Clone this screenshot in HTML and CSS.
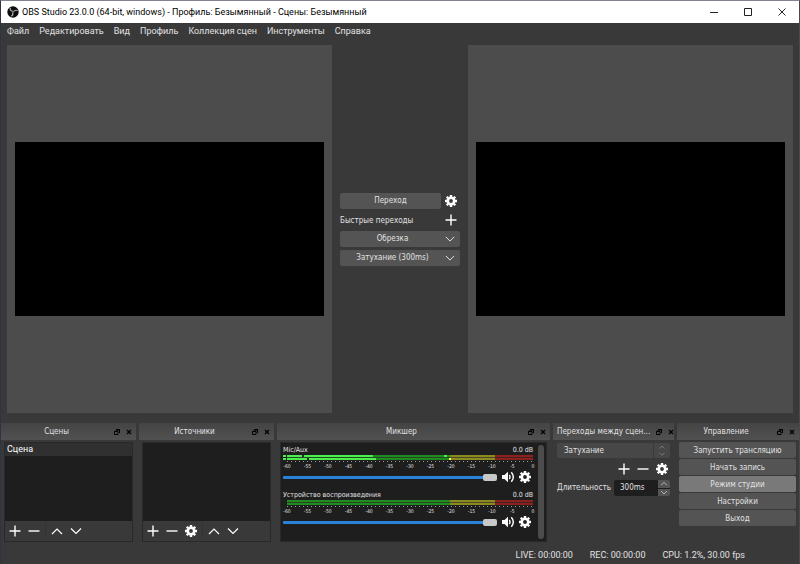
FILE: index.html
```html
<!DOCTYPE html>
<html lang="ru">
<head>
    <meta charset="UTF-8">
    <meta name="viewport" content="width=device-width, initial-scale=1.0">
    <title>OBS Studio 23.0.0</title>
    <link rel="stylesheet" href="styles.css">
</head>
<body>
    <!-- shared icons -->
    <svg class="sprite" width="0" height="0" aria-hidden="true">
        <symbol id="i-plus" viewBox="0 0 12 12"><path d="M6 .5v11M.5 6h11" fill="none" stroke="currentColor" stroke-width="1.4"/></symbol>
        <symbol id="i-minus" viewBox="0 0 12 12"><path d="M.5 6h11" fill="none" stroke="currentColor" stroke-width="1.4"/></symbol>
        <symbol id="i-up" viewBox="0 0 12 12"><path d="M1 9l5-5 5 5" fill="none" stroke="currentColor" stroke-width="1.2"/></symbol>
        <symbol id="i-down" viewBox="0 0 12 12"><path d="M1 3.500l5 5 5-5" fill="none" stroke="currentColor" stroke-width="1.2"/></symbol>
        <symbol id="i-gear" viewBox="0 0 12 12">
            <circle cx="6" cy="6" r="3.200" fill="none" stroke="currentColor" stroke-width="2.600"/>
            <path d="M6 0v2M6 10v2M0 6h2M10 6h2M1.750 1.750l1.400 1.400M8.850 8.850l1.400 1.400M1.750 10.250l1.400-1.400M8.850 3.150l1.400-1.400" stroke="currentColor" stroke-width="2.400"/>
        </symbol>
        <symbol id="i-sound" viewBox="0 0 12 12">
            <path d="M0 4h2.500L6 .8v10.400L2.500 8H0z" fill="currentColor"/>
            <path d="M7.300 4q1.400 2 0 4M9.300 1.200q4 4.800 0 9.600" fill="none" stroke="currentColor" stroke-width="1.400"/>
        </symbol>
        <symbol id="i-float" viewBox="0 0 6 6"><path d="M2 1h3.500v3M2 .5h4M.5 2.500h3.500v3H.5zM.5 2.200H4" fill="none" stroke="currentColor" stroke-width="1"/></symbol>
        <symbol id="i-x" viewBox="0 0 6 6"><path d="M1 1l4 4M5 1L1 5" fill="none" stroke="currentColor" stroke-width="1.300"/></symbol>
    </svg>

    <div class="window">
        <header class="titlebar">
            <svg class="logo" viewBox="0 0 12 12">
                <circle cx="6" cy="6" r="5.700" fill="#0c0c0c"/>
                <path d="M3.200 1.800q-.4 2.800 2.400 3.600M10.600 4.600q-2.600-1-4 1M4.300 10.300q2.400-1.400 1.300-3.900" fill="none" stroke="#b5b5b5" stroke-width="1.100"/>
                <circle cx="6" cy="5.900" r=".8" fill="#8c8c8c"/>
            </svg>
            <h1 class="title">OBS Studio 23.0.0 (64-bit, windows) - Профиль: Безымянный - Сцены: Безымянный</h1>
            <div class="window-buttons">
                <button aria-label="Свернуть"><svg viewBox="0 0 8 8"><path d="M0 4.500h8"/></svg></button>
                <button aria-label="Развернуть"><svg viewBox="0 0 8 8"><path d="M.5.5h7v7h-7z"/></svg></button>
                <button aria-label="Закрыть"><svg viewBox="0 0 8 8"><path d="M.5.5l7 7M7.500.5l-7 7"/></svg></button>
            </div>
        </header>

        <nav class="menu">
            <a href="#">Файл</a>
            <a href="#">Редактировать</a>
            <a href="#">Вид</a>
            <a href="#">Профиль</a>
            <a href="#">Коллекция сцен</a>
            <a href="#">Инструменты</a>
            <a href="#">Справка</a>
        </nav>

        <main class="studio">
            <div class="preview"><div class="canvas"></div></div>
            <div class="quick">
                <div class="quick-row">
                    <button class="btn">Переход</button>
                    <button class="icon" aria-label="Настройки перехода"><svg><use href="#i-gear"/></svg></button>
                </div>
                <div class="quick-row">
                    <span class="quick-label">Быстрые переходы</span>
                    <button class="icon" aria-label="Добавить переход"><svg><use href="#i-plus"/></svg></button>
                </div>
                <button class="btn drop"><span>Обрезка</span><svg><use href="#i-down"/></svg></button>
                <button class="btn drop"><span>Затухание (300ms)</span><svg><use href="#i-down"/></svg></button>
            </div>
            <div class="preview"><div class="canvas"></div></div>
        </main>

        <div class="docks">
            <section class="dock">
                <div class="dock-head">
                    <h2>Сцены</h2>
                    <button aria-label="Открепить"><svg><use href="#i-float"/></svg></button>
                    <button aria-label="Закрыть"><svg><use href="#i-x"/></svg></button>
                </div>
                <div class="box">
                    <ul class="list"><li>Сцена</li></ul>
                    <div class="tools">
                        <button class="icon" aria-label="Добавить"><svg><use href="#i-plus"/></svg></button>
                        <button class="icon" aria-label="Удалить"><svg><use href="#i-minus"/></svg></button>
                        <i class="sep"></i>
                        <button class="icon" aria-label="Вверх"><svg><use href="#i-up"/></svg></button>
                        <button class="icon" aria-label="Вниз"><svg><use href="#i-down"/></svg></button>
                    </div>
                </div>
            </section>

            <section class="dock">
                <div class="dock-head">
                    <h2>Источники</h2>
                    <button aria-label="Открепить"><svg><use href="#i-float"/></svg></button>
                    <button aria-label="Закрыть"><svg><use href="#i-x"/></svg></button>
                </div>
                <div class="box">
                    <ul class="list"></ul>
                    <div class="tools">
                        <button class="icon" aria-label="Добавить"><svg><use href="#i-plus"/></svg></button>
                        <button class="icon" aria-label="Удалить"><svg><use href="#i-minus"/></svg></button>
                        <button class="icon" aria-label="Свойства"><svg><use href="#i-gear"/></svg></button>
                        <i class="sep"></i>
                        <button class="icon" aria-label="Вверх"><svg><use href="#i-up"/></svg></button>
                        <button class="icon" aria-label="Вниз"><svg><use href="#i-down"/></svg></button>
                    </div>
                </div>
            </section>

            <section class="dock">
                <div class="dock-head">
                    <h2>Микшер</h2>
                    <button aria-label="Открепить"><svg><use href="#i-float"/></svg></button>
                    <button aria-label="Закрыть"><svg><use href="#i-x"/></svg></button>
                </div>
                <div class="box mixer">
                    <div class="channels">
                        <div class="channel">
                            <div class="channel-name"><label for="vol-mic">Mic/Aux</label><span>0.0 dB</span></div>
                            <svg class="meter" viewBox="0 0 250 5" preserveAspectRatio="none" shape-rendering="crispEdges">
                                <path fill="#218a21" d="M4 0h163v5H4z"/>
                                <path fill="#8a8a21" d="M167 0h45v5h-45z"/>
                                <path fill="#8a2121" d="M212 0h38v5h-38z"/>
                                <path fill="#1f1e1f" opacity=".6" d="M0 2h250v1H0z"/>
                                <path fill="#4cf04c" d="M0 0h90v2H0zM0 3h93v2H0zM161 0h3v2h-3z"/>
                                <path fill="#1f1e1f" d="M3 0h1v5H3zM19 0h2v2h-2zM24 3h2v2h-2z"/>
                                <path fill="#ffff4c" d="M166 3h2v2h-2z"/>
                            </svg>
                            <div class="scale"><span>-60</span><span>-55</span><span>-50</span><span>-45</span><span>-40</span><span>-35</span><span>-30</span><span>-25</span><span>-20</span><span>-15</span><span>-10</span><span>-5</span><span>0</span></div>
                            <div class="channel-row">
                                <input type="range" id="vol-mic" value="100">
                                <button class="icon" aria-label="Выключить звук"><svg><use href="#i-sound"/></svg></button>
                                <button class="icon" aria-label="Настройки"><svg><use href="#i-gear"/></svg></button>
                            </div>
                        </div>
                        <div class="channel">
                            <div class="channel-name"><label for="vol-out">Устройство воспроизведения</label><span>0.0 dB</span></div>
                            <svg class="meter" viewBox="0 0 250 5" preserveAspectRatio="none" shape-rendering="crispEdges">
                                <path fill="#218a21" d="M4 0h163v5H4z"/>
                                <path fill="#8a8a21" d="M167 0h45v5h-45z"/>
                                <path fill="#8a2121" d="M212 0h38v5h-38z"/>
                                <path fill="#1f1e1f" opacity=".6" d="M0 2h250v1H0z"/>
                            </svg>
                            <div class="scale"><span>-60</span><span>-55</span><span>-50</span><span>-45</span><span>-40</span><span>-35</span><span>-30</span><span>-25</span><span>-20</span><span>-15</span><span>-10</span><span>-5</span><span>0</span></div>
                            <div class="channel-row">
                                <input type="range" id="vol-out" value="100">
                                <button class="icon" aria-label="Выключить звук"><svg><use href="#i-sound"/></svg></button>
                                <button class="icon" aria-label="Настройки"><svg><use href="#i-gear"/></svg></button>
                            </div>
                        </div>
                    </div>
                    <div class="scrollbar"></div>
                </div>
            </section>

            <section class="dock">
                <div class="dock-head">
                    <h2>Переходы между сцен...</h2>
                    <button aria-label="Открепить"><svg><use href="#i-float"/></svg></button>
                    <button aria-label="Закрыть"><svg><use href="#i-x"/></svg></button>
                </div>
                <div class="transitions">
                    <div class="combo">
                        <select aria-label="Переход"><option>Затухание</option></select>
                        <span class="combo-arrows"><svg><use href="#i-up"/></svg><svg><use href="#i-down"/></svg></span>
                    </div>
                    <div class="transition-tools">
                        <button class="icon" aria-label="Добавить"><svg><use href="#i-plus"/></svg></button>
                        <button class="icon" aria-label="Удалить"><svg><use href="#i-minus"/></svg></button>
                        <button class="icon" aria-label="Свойства"><svg><use href="#i-gear"/></svg></button>
                    </div>
                    <div class="duration">
                        <label for="duration">Длительность</label>
                        <div class="spin">
                            <input type="text" id="duration" value="300ms">
                            <div class="spin-buttons">
                                <button aria-label="Больше"><svg><use href="#i-up"/></svg></button>
                                <button aria-label="Меньше"><svg><use href="#i-down"/></svg></button>
                            </div>
                        </div>
                    </div>
                </div>
            </section>

            <section class="dock">
                <div class="dock-head">
                    <h2>Управление</h2>
                    <button aria-label="Открепить"><svg><use href="#i-float"/></svg></button>
                    <button aria-label="Закрыть"><svg><use href="#i-x"/></svg></button>
                </div>
                <div class="controls">
                    <button class="btn">Запустить трансляцию</button>
                    <button class="btn">Начать запись</button>
                    <button class="btn active">Режим студии</button>
                    <button class="btn">Настройки</button>
                    <button class="btn">Выход</button>
                </div>
            </section>
        </div>

        <footer class="status">
            <span>LIVE: 00:00:00</span>
            <span>REC: 00:00:00</span>
            <span>CPU: 1.2%, 30.00 fps</span>
        </footer>
    </div>
</body>
</html>
```

FILE: styles.css
```css
:root {
    --bg: #3a393a;
    --panel: #1f1e1f;
    --btn: #545454;
    --text: #e1e1e1;
    --radius: 2px;
    --font-system: Roboto, "Open Sans", sans-serif;
}

* {
    margin: 0;
    padding: 0;
    box-sizing: border-box;
}

body {
    background: var(--bg);
    color: var(--text);
    font: 8px/12px "DejaVu Sans Condensed", "DejaVu Sans", sans-serif;
}

button, input, select {
    font: inherit;
    color: inherit;
    border: none;
    background: none;
}

svg {
    display: block;
}

.sprite {
    position: absolute;
}

.window {
    min-height: 100vh;
    display: flex;
    flex-direction: column;
    border-top: 1px solid #80858f;
    border-left: 1px solid #2d3542;
    border-right: 1px solid #4a4a4c;
}

/* title bar */
.titlebar {
    display: flex;
    align-items: center;
    height: 22px;
    padding-left: 6px;
    background: #fff;
    color: #000;
}

.logo {
    width: 12px;
    height: 12px;
}

.title {
    flex: 1;
    margin-left: 3px;
    font: 9px/12px var(--font-system);
    white-space: nowrap;
}

.window-buttons {
    display: flex;
}

.window-buttons button {
    display: flex;
    align-items: center;
    justify-content: center;
    width: 34px;
    height: 22px;
}

.window-buttons svg {
    width: 8px;
    height: 8px;
    fill: none;
    stroke: #222;
}

.menu {
    display: flex;
    gap: 10px;
    height: 22px;
    padding: 2px 6px;
    font: 9px/12px var(--font-system);
}

.menu a {
    color: inherit;
    text-decoration: none;
}

/* studio mode */
.studio {
    flex: 1;
    display: grid;
    grid-template-columns: 1fr 120px 1fr;
    gap: 8px;
    padding: 0 6px;
}

.preview {
    display: flex;
    align-items: center;
    padding: 8px;
    background: #4c4c4c;
}

.canvas {
    width: 100%;
    aspect-ratio: 16 / 9;
    background: #000;
}

.quick {
    display: flex;
    flex-direction: column;
    justify-content: center;
    gap: 3px;
}

.quick-row {
    display: flex;
    align-items: center;
    justify-content: space-between;
    gap: 4px;
    height: 16px;
    padding-right: 3px;
}

.quick-row .btn {
    flex: 1;
}

.quick-label {
    padding-top: 2px;
}

.btn {
    height: 16px;
    padding-top: 1px;
    border-radius: var(--radius);
    background: var(--btn);
    text-align: center;
    white-space: nowrap;
}

.btn.active {
    background: #7a797a;
}

.drop {
    display: flex;
    align-items: center;
    padding-right: 5px;
}

.drop span {
    flex: 1;
}

.drop svg {
    width: 10px;
    height: 10px;
}

.icon {
    color: #fff;
}

.icon svg {
    width: 12px;
    height: 12px;
}

/* docks */
.docks {
    display: grid;
    grid-template-columns: 135fr 135fr 273fr 121fr 122fr;
    gap: 3px;
    margin-top: 10px;
}

.dock {
    min-width: 0;
}

.dock-head {
    display: flex;
    align-items: center;
    gap: 6px;
    height: 17px;
    padding: 0 4px;
    background: linear-gradient(#454445, #525152);
}

.dock-head h2 {
    flex: 1;
    font-size: 8px;
    font-weight: 400;
    text-align: center;
    white-space: nowrap;
}

.dock-head button {
    color: #000;
}

.dock-head svg {
    width: 6px;
    height: 6px;
}

.box {
    display: flex;
    flex-direction: column;
    height: 100px;
    margin: 2px 3px 0;
    border: 1px solid #2a292a;
}

.list {
    flex: 1;
    list-style: none;
    background: var(--panel);
}

.list li {
    height: 13px;
    padding-left: 2px;
    background: #303030;
    color: #fff;
    font: 9px/13px var(--font-system);
}

.tools {
    display: flex;
    align-items: center;
    gap: 7px;
    height: 20px;
    padding-left: 4px;
}

.sep {
    width: 1px;
    height: 14px;
    margin: 0 -2px;
    background: #333233;
}

/* mixer */
.mixer {
    flex-direction: row;
    gap: 5px;
    padding: 2px;
    background: var(--panel);
}

.channels {
    flex: 1;
}

.channel {
    height: 45px;
}

.channel-name {
    display: flex;
    justify-content: space-between;
    height: 10px;
    font-size: 7px;
    line-height: 10px;
}

.meter {
    width: 100%;
    height: 5px;
}

.scale {
    display: flex;
    justify-content: space-between;
    height: 10px;
    margin-left: 4px;
    padding-top: 2px;
    background: repeating-linear-gradient(90deg, #999 0 1px, transparent 1px 4px) no-repeat 0 1px / 100% 1px;
    font-size: 5px;
    line-height: 8px;
}

.scale span {
    display: flex;
    justify-content: center;
    width: 0;
}

.channel-row {
    display: flex;
    align-items: center;
    gap: 5px;
    height: 14px;
    padding-right: 2px;
}

.channel-row input {
    flex: 1;
    min-width: 0;
    height: 12px;
    appearance: none;
}

.channel-row input::-webkit-slider-runnable-track {
    height: 3px;
    border-radius: 1px;
    background: #2a82da;
}

.channel-row input::-webkit-slider-thumb {
    appearance: none;
    width: 14px;
    height: 7px;
    margin-top: -2px;
    border-radius: var(--radius);
    background: #c8c8c8;
}

.scrollbar {
    width: 6px;
    border-radius: 3px;
    background: #4c4c4c;
}

/* transitions */
.transitions {
    display: flex;
    flex-direction: column;
    gap: 5px;
    padding: 3px 4px;
}

.combo {
    display: flex;
    height: 15px;
    border-radius: var(--radius);
    background: #484748;
}

.combo select {
    flex: 1;
    padding-left: 7px;
    appearance: none;
}

.combo-arrows {
    display: flex;
    flex-direction: column;
    justify-content: center;
    gap: 1px;
    padding: 0 5px;
    border-left: 1px solid var(--bg);
    color: #999;
}

.combo-arrows svg {
    width: 6px;
    height: 6px;
}

.transition-tools {
    display: flex;
    justify-content: flex-end;
    gap: 7px;
    padding-right: 2px;
}

.duration {
    display: flex;
    align-items: center;
    justify-content: space-between;
}

.spin {
    display: flex;
    height: 16px;
    border-radius: var(--radius);
    overflow: hidden;
    background: var(--panel);
}

.spin input {
    width: 44px;
    padding-left: 6px;
}

.spin-buttons {
    display: grid;
    grid-template-rows: 1fr 1fr;
    gap: 1px;
    width: 12px;
    flex-shrink: 0;
}

.spin-buttons button {
    display: flex;
    align-items: center;
    justify-content: center;
    min-height: 0;
    background: var(--btn);
}

.spin svg {
    width: 8px;
    height: 7px;
}

.controls {
    display: flex;
    flex-direction: column;
    gap: 1px;
    padding: 2px 3px 0 2px;
}

.status {
    display: flex;
    justify-content: flex-end;
    gap: 17px;
    height: 22px;
    padding: 7px 54px 0 0;
    font: 9px/12px var(--font-system);
}
```
